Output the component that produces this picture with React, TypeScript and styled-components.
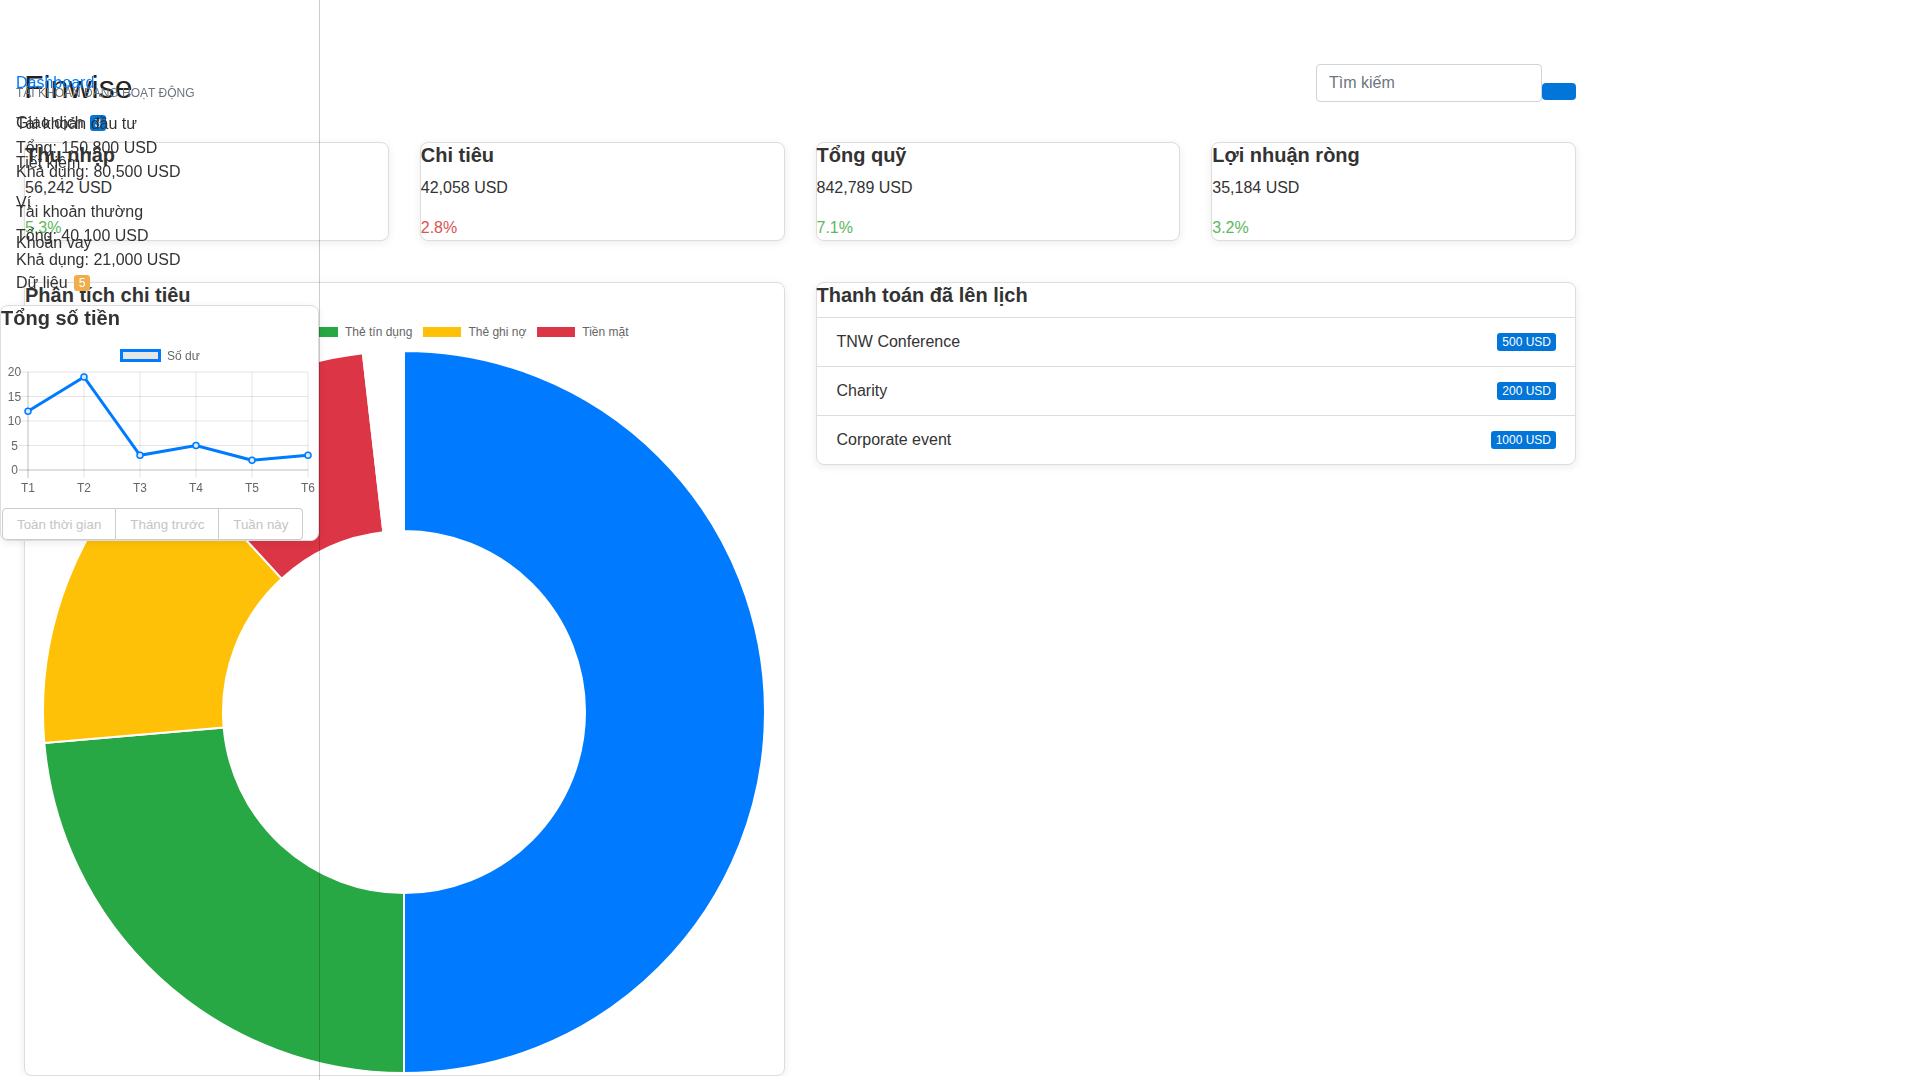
import React from 'react';
import styled, {createGlobalStyle} from 'styled-components';

const GlobalStyle = createGlobalStyle`
	* {
		box-sizing: border-box;
	}

	html,
	body {
		margin: 0;
		padding: 0;
		background: #fff;
	}

	body {
		font-family: 'Liberation Sans', Arial, sans-serif;
		font-size: 16px;
		line-height: 1.5;
		color: #333;
	}
`;

/* ---------- sidebar ---------- */

const Sidebar = styled.aside`
	position: fixed;
	top: 0;
	left: 0;
	bottom: 0;
	width: 320px;
	border-right: 1px solid rgba(0, 0, 0, 0.2);
	z-index: 10;
`;

// nav and account list share one cell
const SideStack = styled.div`
	display: grid;

	& > * {
		grid-area: 1 / 1;
	}
`;

const NavList = styled.ul`
	list-style: none;
	margin: 0;
	padding: 63px 0 0 16px;
`;

const NavItem = styled.li<{$active?: boolean}>`
	display: flex;
	align-items: center;
	height: 40px;
	color: ${({$active}) => ($active ? '#007bff' : '#333')};
`;

const Badge = styled.span<{$color: string}>`
	display: inline-block;
	margin-left: 6px;
	padding: 2px 5px;
	font-size: 12px;
	line-height: 12px;
	color: #fff;
	background: ${({$color}) => $color};
	border-radius: 3px;
`;

const Accounts = styled.div`
	padding: 84px 0 0 16px;
`;

const AccountsHeading = styled.div`
	margin-bottom: 10px;
	font-size: 12px;
	line-height: 18px;
	color: #6c757d;
	text-transform: uppercase;
`;

const Account = styled.div`
	margin-bottom: 16px;
	line-height: 24px;
`;

const Card = styled.section`
	background: #fff;
	border: 1px solid #ddd;
	border-radius: 8px;
	box-shadow: 0 2px 8px rgba(0, 0, 0, 0.08);
`;

const BalanceCard = styled(Card)`
	margin-top: 2px;
`;

const CardTitle = styled.h5<{$gap?: number}>`
	margin: 0 0 ${({$gap}) => $gap ?? 0}px;
	font-size: 20px;
	font-weight: 700;
	line-height: 24px;
	color: #333;
`;

const ButtonGroup = styled.div`
	display: inline-flex;
	margin: 8px 0 0 1px;
`;

const RangeButton = styled.button`
	height: 32px;
	padding: 0 14px;
	font-family: 'Liberation Sans', Arial, sans-serif;
	font-size: 13.333px;
	color: #c4c4c4;
	background: #fff;
	border: 1px solid #ccc;
	border-left-width: 0;

	&:first-child {
		border-left-width: 1px;
		border-radius: 4px 0 0 4px;
	}

	&:last-child {
		border-radius: 0 4px 4px 0;
	}
`;

/* ---------- main ---------- */

const Main = styled.main`
	width: 1552px;
	margin-left: 24px;
	padding-top: 64px;
`;

const Header = styled.header`
	display: flex;
	justify-content: space-between;
	align-items: flex-start;
	height: 38px;
`;

const Brand = styled.h1`
	margin: 4px 0 0;
	font-size: 32px;
	font-weight: 400;
	line-height: 38px;
	color: #222;
`;

const SearchForm = styled.form`
	display: flex;
	align-items: flex-end;
	height: 38px;
`;

const SearchInput = styled.input`
	width: 226px;
	height: 38px;
	padding: 6px 12px;
	font-family: 'Liberation Sans', Arial, sans-serif;
	font-size: 16px;
	color: #495057;
	border: 1px solid #ced4da;
	border-radius: 4px;
	outline: none;

	&::placeholder {
		color: #6c757d;
	}
`;

const SearchButton = styled.button`
	width: 34px;
	height: 17px;
	margin-bottom: 2px;
	padding: 0;
	border: 0;
	border-radius: 4px;
	background: #0275d8;
`;

const Grid = styled.div`
	display: grid;
	grid-template-columns: repeat(4, 1fr);
	column-gap: 31px;
	row-gap: 41px;
	margin-top: 40px;
	align-items: start;
`;

const Value = styled.p`
	margin: 0 0 16px;
	line-height: 24px;
`;

const Change = styled.span<{$up: boolean}>`
	display: block;
	line-height: 24px;
	color: ${({$up}) => ($up ? '#5cb85c' : '#d9534f')};
`;

const WideCard = styled(Card)`
	grid-column: span 2;
`;

const Legend = styled.div`
	display: flex;
	justify-content: center;
	gap: 11px;
	height: 14px;
	margin-top: 18px;
	font-size: 12px;
	line-height: 14px;
	color: #666;
`;

const LegendItem = styled.div`
	display: flex;
	align-items: center;
	gap: 7px;
	white-space: nowrap;
`;

const Swatch = styled.span<{$color: string}>`
	width: 38px;
	height: 10px;
	background: ${({$color}) => $color};
`;

const PaymentList = styled.ul`
	list-style: none;
	margin: 0;
	padding: 0;
	border-top: 1px solid #ddd;
`;

const PaymentRow = styled.li`
	display: flex;
	justify-content: space-between;
	align-items: center;
	padding: 12px 19px 12px 20px;
	line-height: 24px;

	& + & {
		border-top: 1px solid #ddd;
	}
`;

const Amount = styled.span`
	padding: 2px 5px;
	font-size: 12px;
	line-height: 14px;
	color: #fff;
	background: #0275d8;
	border-radius: 3px;
`;

/* ---------- data ---------- */

const stats = [
	{title: 'Thu nhập', value: '56,242 USD', change: '5.3%', up: true},
	{title: 'Chi tiêu', value: '42,058 USD', change: '2.8%', up: false},
	{title: 'Tổng quỹ', value: '842,789 USD', change: '7.1%', up: true},
	{title: 'Lợi nhuận ròng', value: '35,184 USD', change: '3.2%', up: true},
];

const spending = [
	{label: 'Chuyển tiền', value: 55, color: '#007bff'},
	{label: 'Thẻ tín dụng', value: 26, color: '#28a745'},
	{label: 'Thẻ ghi nợ', value: 16, color: '#ffc107'},
	{label: 'Tiền mặt', value: 11, color: '#dc3545'},
];
const spendingOther = 2;

const payments = [
	{name: 'TNW Conference', amount: '500 USD'},
	{name: 'Charity', amount: '200 USD'},
	{name: 'Corporate event', amount: '1000 USD'},
];

const balance = [12, 19, 3, 5, 2, 3];
const months = ['T1', 'T2', 'T3', 'T4', 'T5', 'T6'];

/* ---------- charts ---------- */

const CX = 404;
const CY = 712;
const R_OUT = 361;
const R_IN = 181;

const polar = (r: number, deg: number) => {
	const a = (deg * Math.PI) / 180;
	return [CX + r * Math.sin(a), CY - r * Math.cos(a)];
};

const slicePath = (start: number, end: number) => {
	const [x1, y1] = polar(R_OUT, start);
	const [x2, y2] = polar(R_OUT, end);
	const [x3, y3] = polar(R_IN, end);
	const [x4, y4] = polar(R_IN, start);
	const large = end - start > 180 ? 1 : 0;
	return `M${x1} ${y1} A${R_OUT} ${R_OUT} 0 ${large} 1 ${x2} ${y2} L${x3} ${y3} A${R_IN} ${R_IN} 0 ${large} 0 ${x4} ${y4} Z`;
};

const Doughnut = () => {
	const slices = [...spending, {label: '', value: spendingOther, color: '#fff'}];
	const total = slices.reduce((s, d) => s + d.value, 0);
	let angle = 0;

	return (
		<svg width="758" height="736" viewBox="25 339 758 736" style={{display: 'block'}}>
			{slices.map((d, i) => {
				const start = angle;
				angle += (d.value / total) * 360;
				return <path key={i} d={slicePath(start, angle)} fill={d.color} stroke="#fff" strokeWidth="2" />;
			})}
		</svg>
	);
};

const X0 = 28;
const STEP = 56;
const Y_ZERO = 470;
const UNIT = 4.9;

const LineChart = () => {
	const points = balance.map((v, i) => [X0 + i * STEP, Y_ZERO - v * UNIT]);
	const ticks = [20, 15, 10, 5, 0];

	return (
		<svg width="317" height="170" viewBox="1 330 317 170" style={{display: 'block'}}>
			<rect x="121.5" y="350.5" width="38" height="10" fill="#e6e6e6" stroke="#007bff" strokeWidth="3" />
			<text x="167" y="356" fontSize="12" fill="#666" dominantBaseline="central" fontFamily="Liberation Sans, Arial, sans-serif">
				Số dư
			</text>

			{ticks.map((t) => {
				const y = Y_ZERO - t * UNIT;
				return (
					<g key={t}>
						<line x1="19" x2="308" y1={y} y2={y} stroke={t === 0 ? 'rgba(0,0,0,0.25)' : 'rgba(0,0,0,0.1)'} />
						<text x="14.5" y={y} fontSize="12" fill="#666" textAnchor="middle" dominantBaseline="central" fontFamily="Liberation Sans, Arial, sans-serif">
							{t}
						</text>
					</g>
				);
			})}

			{months.map((m, i) => {
				const x = X0 + i * STEP;
				return (
					<g key={m}>
						<line x1={x} x2={x} y1="372" y2="478" stroke={i === 0 ? 'rgba(0,0,0,0.25)' : 'rgba(0,0,0,0.1)'} />
						<text x={x} y="488" fontSize="12" fill="#666" textAnchor="middle" dominantBaseline="central" fontFamily="Liberation Sans, Arial, sans-serif">
							{m}
						</text>
					</g>
				);
			})}

			<polyline points={points.map((p) => p.join(',')).join(' ')} fill="none" stroke="#007bff" strokeWidth="3" />
			{points.map(([x, y], i) => (
				<circle key={i} cx={x} cy={y} r="3" fill="#d9e9fb" stroke="#007bff" strokeWidth="1.5" />
			))}
		</svg>
	);
};

/* ---------- page ---------- */

export default function App() {
	return (
		<>
			<GlobalStyle />
			<Main>
				<Header>
					<Brand>Finwise</Brand>
					<SearchForm onSubmit={(e) => e.preventDefault()}>
						<SearchInput placeholder="Tìm kiếm" />
						<SearchButton type="submit" />
					</SearchForm>
				</Header>

				<Grid>
					{stats.map((s) => (
						<Card key={s.title}>
							<CardTitle $gap={9}>{s.title}</CardTitle>
							<Value>{s.value}</Value>
							<Change $up={s.up}>{s.change}</Change>
						</Card>
					))}

					<WideCard>
						<CardTitle>Phân tích chi tiêu</CardTitle>
						<Legend>
							{spending.map((d) => (
								<LegendItem key={d.label}>
									<Swatch $color={d.color} />
									{d.label}
								</LegendItem>
							))}
						</Legend>
						<Doughnut />
					</WideCard>

					<WideCard>
						<CardTitle $gap={10}>Thanh toán đã lên lịch</CardTitle>
						<PaymentList>
							{payments.map((p) => (
								<PaymentRow key={p.name}>
									{p.name}
									<Amount>{p.amount}</Amount>
								</PaymentRow>
							))}
						</PaymentList>
					</WideCard>
				</Grid>
			</Main>

			<Sidebar>
				<SideStack>
					<NavList>
						<NavItem $active>Dashboard</NavItem>
						<NavItem>
							Giao dịch<Badge $color="#0275d8">3</Badge>
						</NavItem>
						<NavItem>Tiết kiệm</NavItem>
						<NavItem>Ví</NavItem>
						<NavItem>Khoản vay</NavItem>
						<NavItem>
							Dữ liệu<Badge $color="#f0ad4e">5</Badge>
						</NavItem>
					</NavList>

					<Accounts>
						<AccountsHeading>Tài khoản đang hoạt động</AccountsHeading>
						<Account>
							<div>Tài khoản đầu tư</div>
							<div>Tổng: 150,800 USD</div>
							<div>Khả dụng: 80,500 USD</div>
						</Account>
						<Account>
							<div>Tài khoản thường</div>
							<div>Tổng: 40,100 USD</div>
							<div>Khả dụng: 21,000 USD</div>
						</Account>
					</Accounts>
				</SideStack>

				<BalanceCard>
					<CardTitle>Tổng số tiền</CardTitle>
					<LineChart />
					<ButtonGroup>
						<RangeButton>Toàn thời gian</RangeButton>
						<RangeButton>Tháng trước</RangeButton>
						<RangeButton>Tuần này</RangeButton>
					</ButtonGroup>
				</BalanceCard>
			</Sidebar>
		</>
	);
}
